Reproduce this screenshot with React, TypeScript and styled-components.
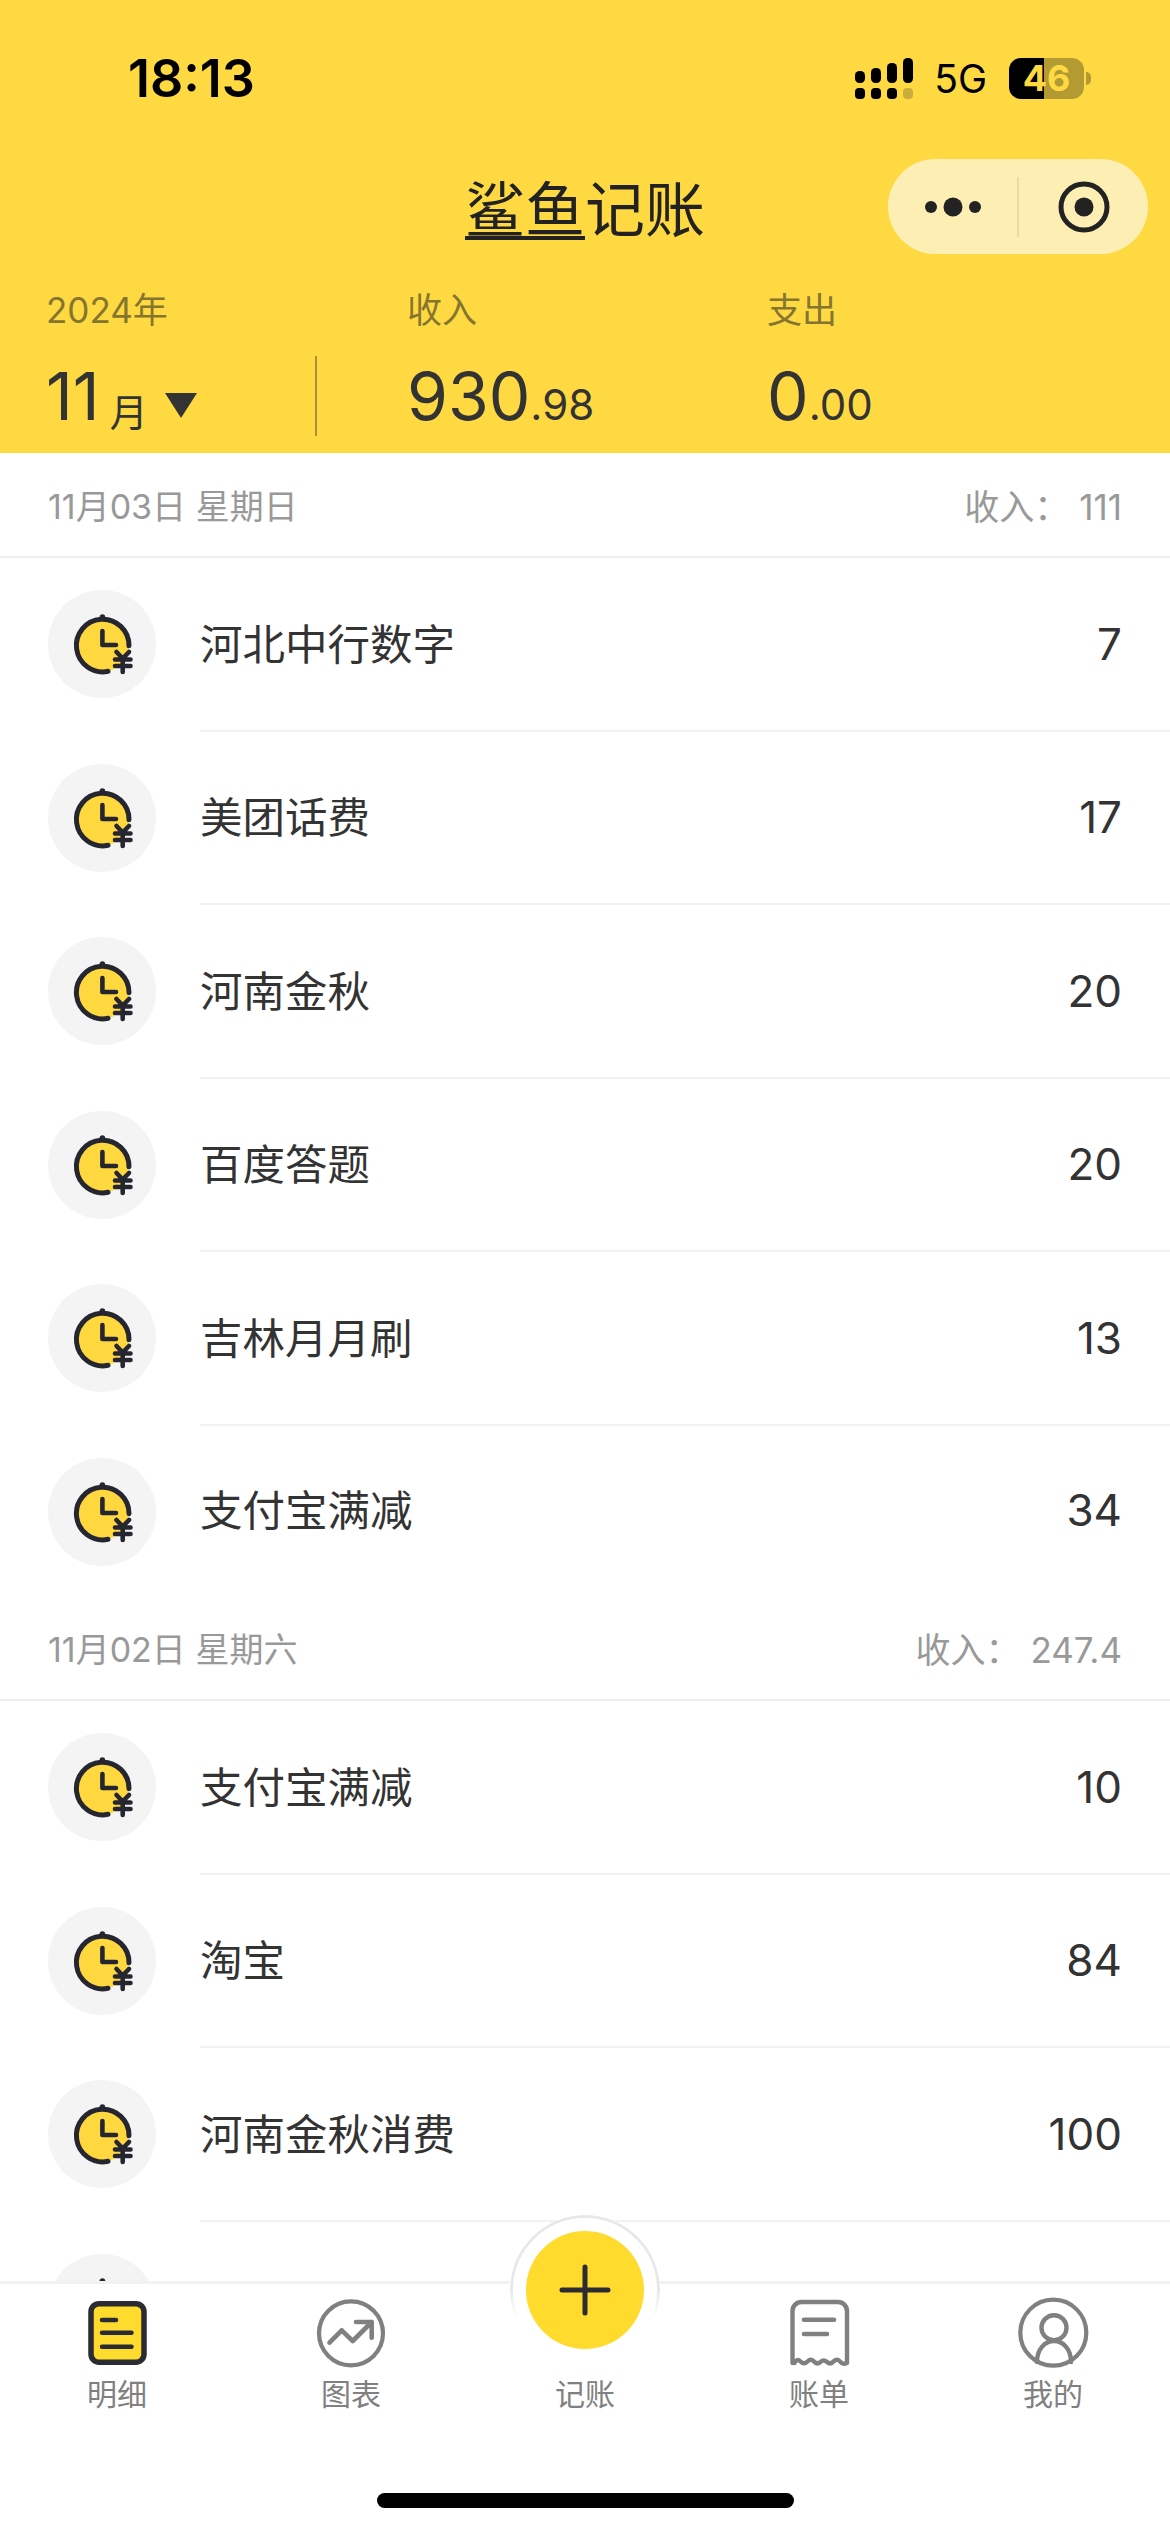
import React from 'react';
import styled, { createGlobalStyle } from 'styled-components';

const FONT = `Inter, "Noto Sans CJK SC", sans-serif`;

const GlobalStyle = createGlobalStyle`
  html, body {
    margin: 0;
    padding: 0;
    background: #fff;
    font-family: ${FONT};
  }
`;

type Entry = { name: string; amount: string };
type Section = { date: string; income: string; entries: Entry[] };

// the last entry is almost hidden behind the tab bar, only its avatar shows
const sections: Section[] = [
  {
    date: '11月03日 星期日',
    income: '111',
    entries: [
      { name: '河北中行数字', amount: '7' },
      { name: '美团话费', amount: '17' },
      { name: '河南金秋', amount: '20' },
      { name: '百度答题', amount: '20' },
      { name: '吉林月月刷', amount: '13' },
      { name: '支付宝满减', amount: '34' },
    ],
  },
  {
    date: '11月02日 星期六',
    income: '247.4',
    entries: [
      { name: '支付宝满减', amount: '10' },
      { name: '淘宝', amount: '84' },
      { name: '河南金秋消费', amount: '100' },
      { name: '', amount: '' },
    ],
  },
];

const SignalIcon = () => (
  <svg width="58" height="41" viewBox="0 0 58 41">
    <rect x="0" y="13" width="10" height="12" rx="4.5" fill="#000" />
    <rect x="16" y="10" width="10" height="15" rx="4.5" fill="#000" />
    <rect x="32" y="5" width="10" height="20" rx="4.5" fill="#000" />
    <rect x="48" y="0" width="10" height="25" rx="4.5" fill="#000" />
    <rect x="0" y="30" width="10" height="11" rx="4" fill="#000" />
    <rect x="16" y="30" width="10" height="11" rx="4" fill="#000" />
    <rect x="32" y="30" width="10" height="11" rx="4" fill="#000" />
    <rect x="48" y="30" width="10" height="11" rx="4" fill="#c9ae3c" />
  </svg>
);

const MoreIcon = () => (
  <svg width="56" height="20" viewBox="0 0 56 20">
    <circle cx="6" cy="10" r="6" fill="#222" />
    <circle cx="28" cy="10" r="9.5" fill="#222" />
    <circle cx="50" cy="10" r="6" fill="#222" />
  </svg>
);

const CloseIcon = () => (
  <svg width="52" height="52" viewBox="0 0 52 52">
    <circle cx="26" cy="26" r="23" fill="none" stroke="#222" strokeWidth="5" />
    <circle cx="26" cy="26" r="9.5" fill="#222" />
  </svg>
);

const ClockIcon = () => (
  <svg width="108" height="108" viewBox="0 0 108 108">
    <circle cx="54.7" cy="55.7" r="26" fill="#ffd73f" />
    <path
      d="M81 55.7A26.3 26.3 0 1 0 60 81.3"
      fill="none"
      stroke="#262631"
      strokeWidth="5"
      strokeLinecap="round"
    />
    <circle cx="54.4" cy="27" r="2.8" fill="#262631" />
    <path
      d="M54.4 41V55H68"
      fill="none"
      stroke="#262631"
      strokeWidth="4.6"
      strokeLinecap="round"
      strokeLinejoin="round"
    />
    <path
      d="M68.500 62L74.700 68.500L81 62M67 69.500H82.500M67 76H82.500M74.700 68.500V82"
      fill="none"
      stroke="#262631"
      strokeWidth="4.6"
      strokeLinecap="round"
      strokeLinejoin="round"
    />
  </svg>
);

const DetailIcon = () => (
  <svg width="100" height="90" viewBox="0 0 100 90">
    <rect x="24" y="17.7" width="53" height="58.5" rx="8" fill="#ffdb2e" stroke="#2b2b33" strokeWidth="5.5" />
    <path
      d="M35 34H49M35 46.7H64.5M35 60.7H64.5"
      stroke="#2b2b33"
      strokeWidth="4.5"
      strokeLinecap="round"
    />
  </svg>
);

const ChartIcon = () => (
  <svg width="100" height="90" viewBox="0 0 100 90">
    <g fill="none" stroke="#808080" strokeLinecap="round" strokeLinejoin="round">
      <circle cx="50" cy="47.3" r="32" strokeWidth="4.2" />
      <path d="M28.5 56.7L40.7 44.3L51.7 55L70.7 36M55 36H70.7V51.7" strokeWidth="4.6" />
    </g>
  </svg>
);

const BillIcon = () => (
  <svg width="100" height="90" viewBox="0 0 100 90">
    <g fill="none" stroke="#808080" strokeLinecap="round" strokeLinejoin="round">
      <path
        d="M23.5 77V25a9 9 0 0 1 9-9H69a9 9 0 0 1 9 9V77q-4.500 2-7-1.500t-6.500 0q-3 3.500-6.500 0.500t-6.500 0q-3.500 3-6.500-0.500t-6.500 0q-3.500 3.500-7 0t-6 1.500"
        strokeWidth="4.4"
      />
      <path d="M35 33.700H65M35 48H58" strokeWidth="4.6" />
    </g>
  </svg>
);

const ProfileIcon = () => (
  <svg width="100" height="90" viewBox="0 0 100 90">
    <g fill="none" stroke="#808080" strokeLinecap="round">
      <circle cx="50.300" cy="46.700" r="33" strokeWidth="4.200" />
      <circle cx="51" cy="41.700" r="12.500" strokeWidth="4.400" />
      <path d="M34 76C34 63 42 55 51 55C60 55 68 63 68 76" strokeWidth="4.400" />
    </g>
  </svg>
);

const PlusIcon = () => (
  <svg width="52" height="52" viewBox="0 0 52 52">
    <path d="M26 3V49M3 26H49" stroke="#2b2b33" strokeWidth="5" strokeLinecap="round" />
  </svg>
);

const App: React.FC = () => {
  return (
    <Page>
      <GlobalStyle />
      <Header>
        <StatusBar>
          <Clock>18:13</Clock>
          <StatusRight>
            <SignalIcon />
            <NetworkLabel>5G</NetworkLabel>
            <Battery>46</Battery>
            <BatteryTip />
          </StatusRight>
        </StatusBar>
        <NavBar>
          <span />
          <Title>
            <TitleMark>鲨鱼</TitleMark>记账
          </Title>
          <Capsule>
            <CapsuleButton>
              <MoreIcon />
            </CapsuleButton>
            <CapsuleDivider />
            <CapsuleButton>
              <CloseIcon />
            </CapsuleButton>
          </Capsule>
        </NavBar>
        <Summary>
          <MonthCell>
            <SummaryLabel>2024年</SummaryLabel>
            <ValueRow>
              <BigValue>11</BigValue>
              <MonthUnit>月</MonthUnit>
              <Caret />
              <SummaryDivider />
            </ValueRow>
          </MonthCell>
          <SummaryCell>
            <SummaryLabel>收入</SummaryLabel>
            <ValueRow>
              <BigValue>930</BigValue>
              <SmallValue>.98</SmallValue>
            </ValueRow>
          </SummaryCell>
          <SummaryCell>
            <SummaryLabel>支出</SummaryLabel>
            <ValueRow>
              <BigValue>0</BigValue>
              <SmallValue>.00</SmallValue>
            </ValueRow>
          </SummaryCell>
        </Summary>
      </Header>

      <List>
        {sections.map((section) => (
          <div key={section.date}>
            <SectionHead>
              <span>{section.date}</span>
              <SectionIncome>
                <span>收入：</span>
                <span>{section.income}</span>
              </SectionIncome>
            </SectionHead>
            {section.entries.map((entry, i) => (
              <Row key={i} $last={i === 5}>
                <Avatar>
                  <ClockIcon />
                </Avatar>
                <RowBody $last={i === 5}>
                  <EntryName>{entry.name}</EntryName>
                  <EntryAmount>{entry.amount}</EntryAmount>
                </RowBody>
              </Row>
            ))}
          </div>
        ))}
      </List>

      <TabBar>
        <AddRing />
        <AddButton>
          <PlusIcon />
        </AddButton>
        <Tabs>
          <Tab>
            <DetailIcon />
            <TabLabel>明细</TabLabel>
          </Tab>
          <Tab>
            <ChartIcon />
            <TabLabel>图表</TabLabel>
          </Tab>
          <Tab>
            <TabSpacer />
            <TabLabel>记账</TabLabel>
          </Tab>
          <Tab>
            <BillIcon />
            <TabLabel>账单</TabLabel>
          </Tab>
          <Tab>
            <ProfileIcon />
            <TabLabel>我的</TabLabel>
          </Tab>
        </Tabs>
        <HomeIndicator />
      </TabBar>
    </Page>
  );
};

const Page = styled.div`
  width: 1170px;
  height: 2532px;
  display: flex;
  flex-direction: column;
  overflow: hidden;
  background: #fff;
  color: #333;
`;
const Header = styled.header`
  flex: none;
  height: 453px;
  background: #ffd942;
`;
const StatusBar = styled.div`
  height: 156px;
  padding: 0 79px 0 128px;
  display: flex;
  align-items: center;
  justify-content: space-between;
  color: #000;
`;
const Clock = styled.div`
  font-size: 52px;
  font-weight: 600;
`;
const StatusRight = styled.div`
  display: flex;
  align-items: center;
`;
const NetworkLabel = styled.div`
  margin: 0 22px 0 21px;
  font-size: 39px;
  font-weight: 400;
`;
const Battery = styled.div`
  width: 75px;
  height: 41px;
  border-radius: 12px;
  background: linear-gradient(90deg, #000 0 47%, #b39a32 47% 100%);
  color: #ffd942;
  font-size: 36px;
  font-weight: 700;
  line-height: 41px;
  text-align: center;
`;
const BatteryTip = styled.div`
  width: 5px;
  height: 13px;
  margin-left: 2px;
  border-radius: 0 6px 6px 0;
  background: #b39a32;
`;
const NavBar = styled.div`
  height: 98px;
  padding: 3px 22px 0;
  box-sizing: border-box;
  display: grid;
  grid-template-columns: 1fr auto 1fr;
  align-items: center;
`;
const Title = styled.div`
  font-family: "Noto Sans CJK SC", sans-serif;
  font-size: 60px;
  font-weight: 400;
  line-height: 66px;
  color: #222;
`;
const TitleMark = styled.span`
  display: inline-block;
  border-bottom: 4px solid #222;
  line-height: 60px;
`;
const Capsule = styled.div`
  justify-self: end;
  width: 260px;
  height: 95px;
  border-radius: 48px;
  background: #fdefb4;
  display: flex;
  align-items: center;
`;
const CapsuleButton = styled.div`
  flex: 1;
  display: flex;
  justify-content: center;
  align-items: center;
`;
const CapsuleDivider = styled.div`
  width: 2px;
  height: 60px;
  background: #eadb9e;
`;
const Summary = styled.div`
  height: 199px;
  padding: 36px 0 0 46px;
  box-sizing: border-box;
  display: grid;
  grid-template-columns: 361px 360px 1fr;
`;
const SummaryCell = styled.div`
  display: flex;
  flex-direction: column;
`;
const MonthCell = styled(SummaryCell)``;
const SummaryLabel = styled.div`
  height: 40px;
  margin-bottom: 26px;
  font-size: 35px;
  line-height: 40px;
  color: #85752f;
`;
const ValueRow = styled.div`
  position: relative;
  height: 80px;
  display: flex;
  align-items: baseline;
  color: #333;
`;
const BigValue = styled.span`
  font-size: 66px;
  line-height: 80px;
`;
const SmallValue = styled.span`
  font-size: 42px;
`;
const MonthUnit = styled.span`
  margin-left: 10px;
  position: relative;
  top: 6px;
  font-size: 38px;
`;
const Caret = styled.span`
  width: 0;
  height: 0;
  margin-left: 17px;
  align-self: center;
  position: relative;
  top: 9px;
  border-style: solid;
  border-width: 25px 16px 0;
  border-color: #333 transparent transparent;
`;
const SummaryDivider = styled.span`
  position: absolute;
  top: 0;
  left: 269px;
  width: 2px;
  height: 80px;
  background: #a8913a;
`;
const List = styled.main`
  flex: 1;
  min-height: 0;
  overflow: hidden;
`;
const SectionHead = styled.div`
  height: 105px;
  padding: 0 48px;
  box-sizing: border-box;
  display: flex;
  align-items: center;
  justify-content: space-between;
  border-bottom: 2px solid #eee;
  font-size: 34px;
  color: #999;
`;
const SectionIncome = styled.div`
  display: flex;
  align-items: baseline;
  gap: 10px;
  font-size: 35px;
`;
const Row = styled.div<{ $last: boolean }>`
  height: ${({ $last }) => ($last ? '170.5px' : '173.5px')};
  padding-left: 48px;
  display: flex;
  align-items: stretch;
  gap: 44px;
`;
const Avatar = styled.div`
  flex: none;
  width: 108px;
  height: 108px;
  margin-top: 32px;
  border-radius: 50%;
  background: #f4f4f5;
`;
const RowBody = styled.div<{ $last: boolean }>`
  flex: 1;
  padding-right: 48px;
  display: flex;
  align-items: center;
  justify-content: space-between;
  border-bottom: 2px solid ${({ $last }) => ($last ? 'transparent' : '#f2f2f2')};
  color: #333;
`;
const EntryName = styled.span`
  margin-bottom: 5px;
  font-size: 42.5px;
`;
const EntryAmount = styled.span`
  font-size: 44px;
`;
const TabBar = styled.nav`
  position: relative;
  flex: none;
  height: 251px;
  box-sizing: border-box;
  border-top: 3px solid #f2f2f2;
  background: #fff;
`;
const AddRing = styled.div`
  position: absolute;
  top: -69px;
  left: 510px;
  width: 150px;
  height: 150px;
  border-radius: 50%;
  background: #fff;
  &::before {
    content: '';
    position: absolute;
    inset: 0;
    box-sizing: border-box;
    border: 3px solid #e8e8e8;
    border-radius: 50%;
    mask-image: linear-gradient(#000 50%, transparent 68%);
  }
`;
const AddButton = styled.div`
  position: absolute;
  top: -53px;
  left: 526px;
  width: 118px;
  height: 118px;
  border-radius: 50%;
  background: #ffdb2e;
  display: flex;
  align-items: center;
  justify-content: center;
`;
const Tabs = styled.div`
  position: relative;
  padding-top: 2px;
  display: grid;
  grid-template-columns: repeat(5, 234px);
`;
const Tab = styled.div`
  display: flex;
  flex-direction: column;
  align-items: center;
`;
const TabSpacer = styled.div`
  height: 90px;
`;
const TabLabel = styled.div`
  margin-top: 1px;
  font-size: 30px;
  line-height: 34px;
  color: #808080;
`;
const HomeIndicator = styled.div`
  position: absolute;
  left: 377px;
  bottom: 24px;
  width: 417px;
  height: 15px;
  border-radius: 8px;
  background: #000;
`;

export default App;
